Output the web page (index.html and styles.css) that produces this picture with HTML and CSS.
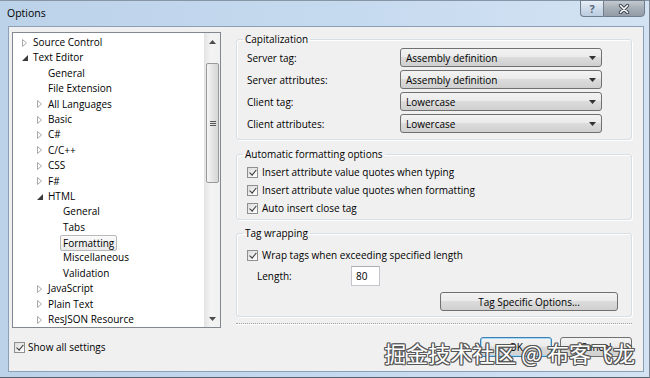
FILE: index.html
```html
<!DOCTYPE html>
<html lang="en">
<head>
    <meta charset="UTF-8">
    <title>Options</title>
    <link rel="stylesheet" href="styles.css">
</head>
<body>
<div class="window">
    <div class="titlebar">
        <span class="title">Options</span>
        <div class="caption-buttons">
            <span class="cap-btn help">?</span>
            <span class="cap-btn close">
                <svg width="12" height="10" viewBox="0 0 12 10"><path d="M2.5 1.5 L9.5 8.5 M9.5 1.5 L2.5 8.5" stroke="#3b4450" stroke-width="3.4" stroke-linecap="round"/><path d="M2.5 1.5 L9.5 8.5 M9.5 1.5 L2.5 8.5" stroke="#fff" stroke-width="1.6" stroke-linecap="round"/></svg>
            </span>
        </div>
    </div>

    <div class="client">
        <div class="main">
            <div class="tree">
                <ul class="tree-list">
                    <li class="row l0"><span class="twisty"><svg width="5" height="8" viewBox="0 0 5 8"><path d="M0.5 0.5 L4.5 4 L0.5 7.5 Z" fill="#fff" stroke="#a8a8a8"/></svg></span>Source Control</li>
                    <li class="row l0"><span class="twisty"><svg width="6" height="6" viewBox="0 0 6 6"><path d="M6 0 L6 6 L0 6 Z" fill="#3a3a3a"/></svg></span>Text Editor</li>
                    <li class="row l1"><span class="twisty"></span>General</li>
                    <li class="row l1"><span class="twisty"></span>File Extension</li>
                    <li class="row l1"><span class="twisty"><svg width="5" height="8" viewBox="0 0 5 8"><path d="M0.5 0.5 L4.5 4 L0.5 7.5 Z" fill="#fff" stroke="#a8a8a8"/></svg></span>All Languages</li>
                    <li class="row l1"><span class="twisty"><svg width="5" height="8" viewBox="0 0 5 8"><path d="M0.5 0.5 L4.5 4 L0.5 7.5 Z" fill="#fff" stroke="#a8a8a8"/></svg></span>Basic</li>
                    <li class="row l1"><span class="twisty"><svg width="5" height="8" viewBox="0 0 5 8"><path d="M0.5 0.5 L4.5 4 L0.5 7.5 Z" fill="#fff" stroke="#a8a8a8"/></svg></span>C#</li>
                    <li class="row l1"><span class="twisty"><svg width="5" height="8" viewBox="0 0 5 8"><path d="M0.5 0.5 L4.5 4 L0.5 7.5 Z" fill="#fff" stroke="#a8a8a8"/></svg></span>C/C++</li>
                    <li class="row l1"><span class="twisty"><svg width="5" height="8" viewBox="0 0 5 8"><path d="M0.5 0.5 L4.5 4 L0.5 7.5 Z" fill="#fff" stroke="#a8a8a8"/></svg></span>CSS</li>
                    <li class="row l1"><span class="twisty"><svg width="5" height="8" viewBox="0 0 5 8"><path d="M0.5 0.5 L4.5 4 L0.5 7.5 Z" fill="#fff" stroke="#a8a8a8"/></svg></span>F#</li>
                    <li class="row l1"><span class="twisty"><svg width="6" height="6" viewBox="0 0 6 6"><path d="M6 0 L6 6 L0 6 Z" fill="#3a3a3a"/></svg></span>HTML</li>
                    <li class="row l2"><span class="twisty"></span>General</li>
                    <li class="row l2"><span class="twisty"></span>Tabs</li>
                    <li class="row l2"><span class="twisty"></span><span class="sel">Formatting</span></li>
                    <li class="row l2"><span class="twisty"></span>Miscellaneous</li>
                    <li class="row l2"><span class="twisty"></span>Validation</li>
                    <li class="row l1"><span class="twisty"><svg width="5" height="8" viewBox="0 0 5 8"><path d="M0.5 0.5 L4.5 4 L0.5 7.5 Z" fill="#fff" stroke="#a8a8a8"/></svg></span>JavaScript</li>
                    <li class="row l1"><span class="twisty"><svg width="5" height="8" viewBox="0 0 5 8"><path d="M0.5 0.5 L4.5 4 L0.5 7.5 Z" fill="#fff" stroke="#a8a8a8"/></svg></span>Plain Text</li>
                    <li class="row l1"><span class="twisty"><svg width="5" height="8" viewBox="0 0 5 8"><path d="M0.5 0.5 L4.5 4 L0.5 7.5 Z" fill="#fff" stroke="#a8a8a8"/></svg></span>ResJSON Resource</li>
                </ul>
                <div class="scrollbar">
                    <div class="sb-btn"><svg width="7" height="4" viewBox="0 0 7 4"><path d="M0 4 L3.5 0 L7 4 Z" fill="#4d4d4d"/></svg></div>
                    <div class="sb-thumb"><span class="grip"></span></div>
                    <div class="sb-fill"></div>
                    <div class="sb-btn"><svg width="7" height="4" viewBox="0 0 7 4"><path d="M0 0 L7 0 L3.5 4 Z" fill="#4d4d4d"/></svg></div>
                </div>
            </div>

            <div class="panel">
                <fieldset class="group cap">
                    <legend>Capitalization</legend>
                    <div class="field-grid">
                        <span>Server tag:</span>
                        <div class="combo">Assembly definition<svg width="7" height="4" viewBox="0 0 7 4"><path d="M0 0 L7 0 L3.5 4 Z" fill="#333"/></svg></div>
                        <span>Server attributes:</span>
                        <div class="combo">Assembly definition<svg width="7" height="4" viewBox="0 0 7 4"><path d="M0 0 L7 0 L3.5 4 Z" fill="#333"/></svg></div>
                        <span>Client tag:</span>
                        <div class="combo">Lowercase<svg width="7" height="4" viewBox="0 0 7 4"><path d="M0 0 L7 0 L3.5 4 Z" fill="#333"/></svg></div>
                        <span>Client attributes:</span>
                        <div class="combo">Lowercase<svg width="7" height="4" viewBox="0 0 7 4"><path d="M0 0 L7 0 L3.5 4 Z" fill="#333"/></svg></div>
                    </div>
                </fieldset>

                <fieldset class="group auto">
                    <legend>Automatic formatting options</legend>
                    <label class="checkline"><span class="check"></span>Insert attribute value quotes when typing</label>
                    <label class="checkline"><span class="check"></span>Insert attribute value quotes when formatting</label>
                    <label class="checkline"><span class="check"></span>Auto insert close tag</label>
                </fieldset>

                <fieldset class="group wrap">
                    <legend>Tag wrapping</legend>
                    <label class="checkline"><span class="check"></span>Wrap tags when exceeding specified length</label>
                    <div class="length-row">
                        <span class="length-label">Length:</span>
                        <span class="num">80</span>
                    </div>
                    <div class="btn-row">
                        <button class="btn wide">Tag Specific Options...</button>
                    </div>
                </fieldset>

                <div class="separator"></div>
            </div>
        </div>

        <div class="footer">
            <label class="checkline show-all"><span class="check"></span>Show all settings</label>
            <div class="footer-buttons">
                <button class="btn ok">OK</button>
                <button class="btn cancel">Cancel</button>
            </div>
        </div>
    </div>

    <div class="watermark">掘金技术社区 @ 布客飞龙</div>
</div>
</body>
</html>
```

FILE: styles.css
```css
body {
    margin: 0;
    font-family: "Open Sans", "Noto Sans CJK SC", sans-serif;
    font-size: 10px;
    color: #000;
}

.window {
    position: relative;
    width: 650px;
    height: 378px;
    box-sizing: border-box;
    display: flex;
    flex-direction: column;
    overflow: hidden;
    background: linear-gradient(to right, #bcd2e9, #c6daef 55%, #d3e3f3);
    border-bottom: 1px solid #56616d;
    border-right: 1px solid #7c8896;
}

.titlebar {
    height: 26px;
    flex: none;
    display: flex;
    justify-content: space-between;
    border-top: 1px solid #8796a6;
    box-sizing: border-box;
}

.title {
    align-self: center;
    padding-left: 7px;
    font-size: 10.5px;
    margin-top: -2px;
}

.caption-buttons {
    display: flex;
    margin-right: 4px;
    margin-top: -1px;
}

.cap-btn {
    height: 17px;
    box-sizing: border-box;
    display: flex;
    align-items: center;
    justify-content: center;
    border: 1px solid #6f7d8d;
}

.help {
    width: 23px;
    border-right: none;
    border-radius: 0 0 0 4px;
    background: linear-gradient(#e8eff7, #cddbea 50%, #bccde0);
    color: #5b6878;
    font-size: 11px;
    font-weight: bold;
}

.close {
    width: 42px;
    border-radius: 0 0 4px 0;
    background: linear-gradient(#c4c9cf, #a5adb6 50%, #939ca6);
}

.client {
    flex: 1;
    margin: 0 5px 5px 8px;
    background: #f0f0f0;
    border: 1px solid #8ba0b6;
    padding: 5px 11px 0 3px;
    display: flex;
    flex-direction: column;
}

.main {
    display: flex;
    align-items: flex-start;
}

/* tree */
.tree {
    width: 209px;
    height: 296px;
    box-sizing: border-box;
    border: 1px solid #828790;
    background: #fff;
    display: flex;
    flex: none;
}

.tree-list {
    list-style: none;
    margin: 0;
    padding: 2px 0 0;
    flex: 1;
    overflow: hidden;
}

.row {
    height: 15.4px;
    line-height: 15.4px;
    display: flex;
    align-items: center;
    white-space: nowrap;
}

.l0 { padding-left: 6px; }
.l1 { padding-left: 21px; }
.l2 { padding-left: 36px; }

.twisty {
    width: 14px;
    flex: none;
    display: flex;
    align-items: center;
    padding-left: 3px;
    box-sizing: border-box;
}

.sel {
    margin-left: -3px;
    padding: 0 2px;
    line-height: 14px;
    border: 1px solid #b8b8b8;
    border-radius: 2px;
    background: linear-gradient(#fbfbfb, #e9e9e9);
}

.scrollbar {
    width: 15px;
    flex: none;
    display: flex;
    flex-direction: column;
    background: linear-gradient(to right, #e6e6e6, #f4f4f4 40%, #f0f0f0);
    border-left: 1px solid #e3e3e3;
}

.sb-btn {
    height: 17px;
    display: flex;
    align-items: center;
    justify-content: center;
}

.sb-thumb {
    margin: 13px 1px 0;
    height: 118px;
    border: 1px solid #9a9a9a;
    border-radius: 2px;
    background: linear-gradient(to right, #f6f6f6, #e4e4e4 50%, #d6d6d6);
    display: flex;
    align-items: center;
    justify-content: center;
}

.grip {
    width: 6px;
    height: 5px;
    background: repeating-linear-gradient(#555 0 1px, transparent 1px 2px);
}

.sb-fill {
    flex: 1;
}

/* right side */
.panel {
    width: 396px;
    margin-left: 15px;
}

.group {
    margin: 0;
    border: 1px solid #d5dfe5;
    border-radius: 3px;
    box-shadow: inset 1px 1px 0 #fff, 1px 1px 0 #fff;
    min-width: 0;
}

.group legend {
    padding: 0 2px;
    margin-left: -4px;
    line-height: 14px;
}

.cap {
    padding: 2px 10px 6px;
}

.auto {
    margin-top: 7px;
    padding: 2px 10px 2px;
}

.wrap {
    margin-top: 6px;
    padding: 6px 10px 5px;
}

.field-grid {
    display: grid;
    grid-template-columns: 153px 202px;
    row-gap: 3px;
    align-items: center;
}

.combo {
    height: 19px;
    box-sizing: border-box;
    border: 1px solid #707070;
    border-radius: 3px;
    background: linear-gradient(#f3f3f3, #ebebeb 45%, #dcdcdc 50%, #cfcfcf);
    display: flex;
    align-items: center;
    justify-content: space-between;
    padding: 0 5px;
}

.checkline {
    height: 18px;
    display: flex;
    align-items: center;
    gap: 4px;
    white-space: nowrap;
}

.check {
    position: relative;
    width: 11px;
    height: 11px;
    box-sizing: border-box;
    border: 1px solid #8e8f8f;
    background: linear-gradient(135deg, #dadada, #f6f6f6 70%, #fff);
    flex: none;
}

.check::after {
    content: "";
    position: absolute;
    left: 3px;
    top: 0;
    width: 2.5px;
    height: 6px;
    border: solid #3c3c3c;
    border-width: 0 1.5px 1.5px 0;
    transform: rotate(40deg);
}

.length-row {
    margin-top: 2px;
    display: flex;
    align-items: center;
}

.length-label {
    width: 94px;
    margin-left: 10px;
}

.num {
    width: 29px;
    height: 20px;
    box-sizing: border-box;
    border: 1px solid #c3c6cc;
    border-top-color: #abadb3;
    background: #fff;
    line-height: 18px;
    padding-left: 4px;
}

.btn-row {
    margin-top: 6px;
    display: flex;
    justify-content: flex-end;
}

.btn {
    height: 19px;
    box-sizing: border-box;
    border: 1px solid #707070;
    border-radius: 3px;
    background: linear-gradient(#f3f3f3, #ebebeb 45%, #dcdcdc 50%, #cfcfcf);
    font: inherit;
    padding: 0;
    color: #000;
}

.wide {
    width: 178px;
    margin-right: 3px;
}

.separator {
    margin-top: 6px;
    border-top: 1px dotted #a0a0a0;
    border-bottom: 1px solid #fff;
}

.footer {
    margin-top: 8px;
    height: 22px;
    display: flex;
    align-items: center;
    justify-content: space-between;
}

.show-all {
    padding-left: 2px;
    gap: 3px;
}

.footer-buttons {
    display: flex;
    gap: 8px;
}

.ok,
.cancel {
    height: 20px;
    width: 72px;
}

.ok {
    border-color: #3c7fb1;
    box-shadow: inset 0 0 0 1px #a7d8f4;
}

.watermark {
    position: absolute;
    right: 14px;
    bottom: 12px;
    font-family: "Noto Sans CJK SC", sans-serif;
    font-size: 22px;
    line-height: 26px;
    color: #fff;
    text-shadow: 1px 0 0 #555, -1px 0 0 #555, 0 1px 0 #555, 0 -1px 0 #555,
                 1px 1px 0 #555, -1px -1px 0 #555, 1px -1px 0 #555, -1px 1px 0 #555;
    white-space: nowrap;
}
```
